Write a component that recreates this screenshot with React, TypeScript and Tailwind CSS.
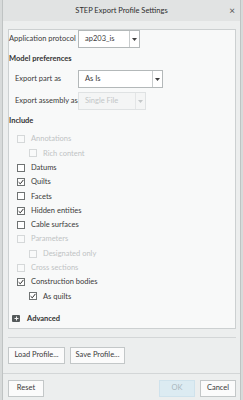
import React from 'react';

const font = { fontFamily: 'Lato, "Liberation Sans", sans-serif' };

function Caret({ disabled }: { disabled?: boolean }) {
  return (
    <svg width="5" height="3" viewBox="0 0 5 3" className="block">
      <path d="M0 0h5L2.5 3z" fill={disabled ? '#c4c8c9' : '#404040'} />
    </svg>
  );
}

function Select({ value, width, disabled }: { value: string; width: string; disabled?: boolean }) {
  return (
    <div
      className={`flex h-[18px] border ${width} ${
        disabled ? 'border-[#dfe2e3] bg-[#f4f5f5] text-[#c2c6c7]' : 'border-[#b3b8b9] bg-white text-[#3b3b3b]'
      }`}
    >
      <div className="flex-1 flex items-center pl-[6px] whitespace-nowrap">{value}</div>
      <div className={`w-[10px] flex items-center justify-center border-l ${disabled ? 'border-[#e3e5e6]' : 'border-[#c8cccd]'}`}>
        <Caret disabled={disabled} />
      </div>
    </div>
  );
}

function Check({ label, checked, disabled, indent }: { label: string; checked?: boolean; disabled?: boolean; indent?: boolean }) {
  return (
    <div className={`flex items-center h-[14.3px] shrink-0 ${indent ? 'pl-[20px]' : 'pl-[8px]'}`}>
      <div
        className={`w-[8px] h-[8px] border flex items-center justify-center ${
          disabled ? 'border-[#d5d8d9] bg-[#f9fafa]' : 'border-[#6f7373] bg-white'
        }`}
      >
        {checked && (
          <svg width="6" height="6" viewBox="0 0 6 6">
            <path d="M0.6 3.2L2.3 4.8L5.4 0.9" fill="none" stroke="#2d2d2d" strokeWidth="1" />
          </svg>
        )}
      </div>
      <span className={`ml-[6px] whitespace-nowrap ${disabled ? 'text-[#bfc3c4]' : 'text-[#3a3a3a]'}`}>{label}</span>
    </div>
  );
}

function Btn({ children, w, disabled }: { children: React.ReactNode; w: string; disabled?: boolean }) {
  return (
    <div
      className={`h-[17px] ${w} flex items-center justify-center border whitespace-nowrap ${
        disabled ? 'border-[#cfe2ec] bg-[#dcebf2] text-[#a9b7be]' : 'border-[#c3c7c8] bg-[#fbfbfb] text-[#3a3a3a]'
      }`}
    >
      {children}
    </div>
  );
}

export default function App() {
  return (
    <div className="w-[243px] h-[400px] bg-[#d7dada] overflow-hidden text-[7.5px] leading-none" style={font}>
      <div className="ml-[2px] w-[239px] h-[400px] border-l border-r border-[#bfc3c3] bg-[#eceeee]">
        {/* title bar */}
        <div className="relative h-[21px] bg-[#e1e3e3] flex items-center justify-center text-[#2e2e2e] text-[7.5px]">
          STEP Export Profile Settings
          <span className="absolute right-[5px] top-[5px] text-[10px] text-[#555]">×</span>
        </div>

        <div className="pl-[5px] pr-[4px] pt-[8px]">
          {/* main panel */}
          <div className="border border-[#ccd0d1] bg-[#f8f9f9] pb-[5px]">
            <div className="flex items-center h-[18px]">
              <span className="w-[69px] whitespace-nowrap text-[#3a3a3a]">Application protocol</span>
              <Select value="ap203_is" width="w-[62px]" />
            </div>
            <div className="h-[22px] flex items-center font-bold text-[#333]">Model preferences</div>
            <div className="flex items-center h-[18px]">
              <span className="pl-[6px] w-[69px] whitespace-nowrap text-[#3a3a3a]">Export part as</span>
              <Select value="As Is" width="w-[85px]" />
            </div>
            <div className="flex items-center h-[18px] mt-[4px]">
              <span className="pl-[6px] w-[69px] whitespace-nowrap text-[#3a3a3a]">Export assembly as</span>
              <Select value="Single File" width="w-[68px]" disabled />
            </div>
            <div className="h-[21px] flex items-center font-bold text-[#333]">Include</div>
            <div className="mt-[1px]">
              <Check label="Annotations" disabled />
              <Check label="Rich content" disabled indent />
              <Check label="Datums" />
              <Check label="Quilts" checked />
              <Check label="Facets" />
              <Check label="Hidden entities" checked />
              <Check label="Cable surfaces" />
              <Check label="Parameters" disabled />
              <Check label="Designated only" disabled indent />
              <Check label="Cross sections" disabled />
              <Check label="Construction bodies" checked />
              <Check label="As quilts" checked indent />
            </div>
            <div className="flex items-center h-[8px] mt-[11px] pl-[3px]">
              <div className="w-[8px] h-[7px] bg-[#555a5b] rounded-[1px] flex items-center justify-center">
                <svg width="5" height="5" viewBox="0 0 5 5">
                  <path d="M2.5 0.5v4M0.5 2.5h4" stroke="#f2f2f2" strokeWidth="1" />
                </svg>
              </div>
              <span className="ml-[7px] font-bold text-[#333]">Advanced</span>
            </div>
          </div>

          <div className="h-px bg-[#d3d6d7] mt-[8px]" />
          <div className="flex gap-[5px] mt-[9px]">
            <Btn w="w-[57px]">Load Profile...</Btn>
            <Btn w="w-[55px]">Save Profile...</Btn>
          </div>
        </div>
        <div className="h-px bg-[#d3d6d7] mt-[9px]" />
        <div className="flex items-center pl-[5px] pr-[4px] mt-[6px]">
          <Btn w="w-[36px]">Reset</Btn>
          <div className="flex-1" />
          <Btn w="w-[36px]" disabled>OK</Btn>
          <div className="w-[5px]" />
          <Btn w="w-[36px]">Cancel</Btn>
        </div>
      </div>
    </div>
  );
}
